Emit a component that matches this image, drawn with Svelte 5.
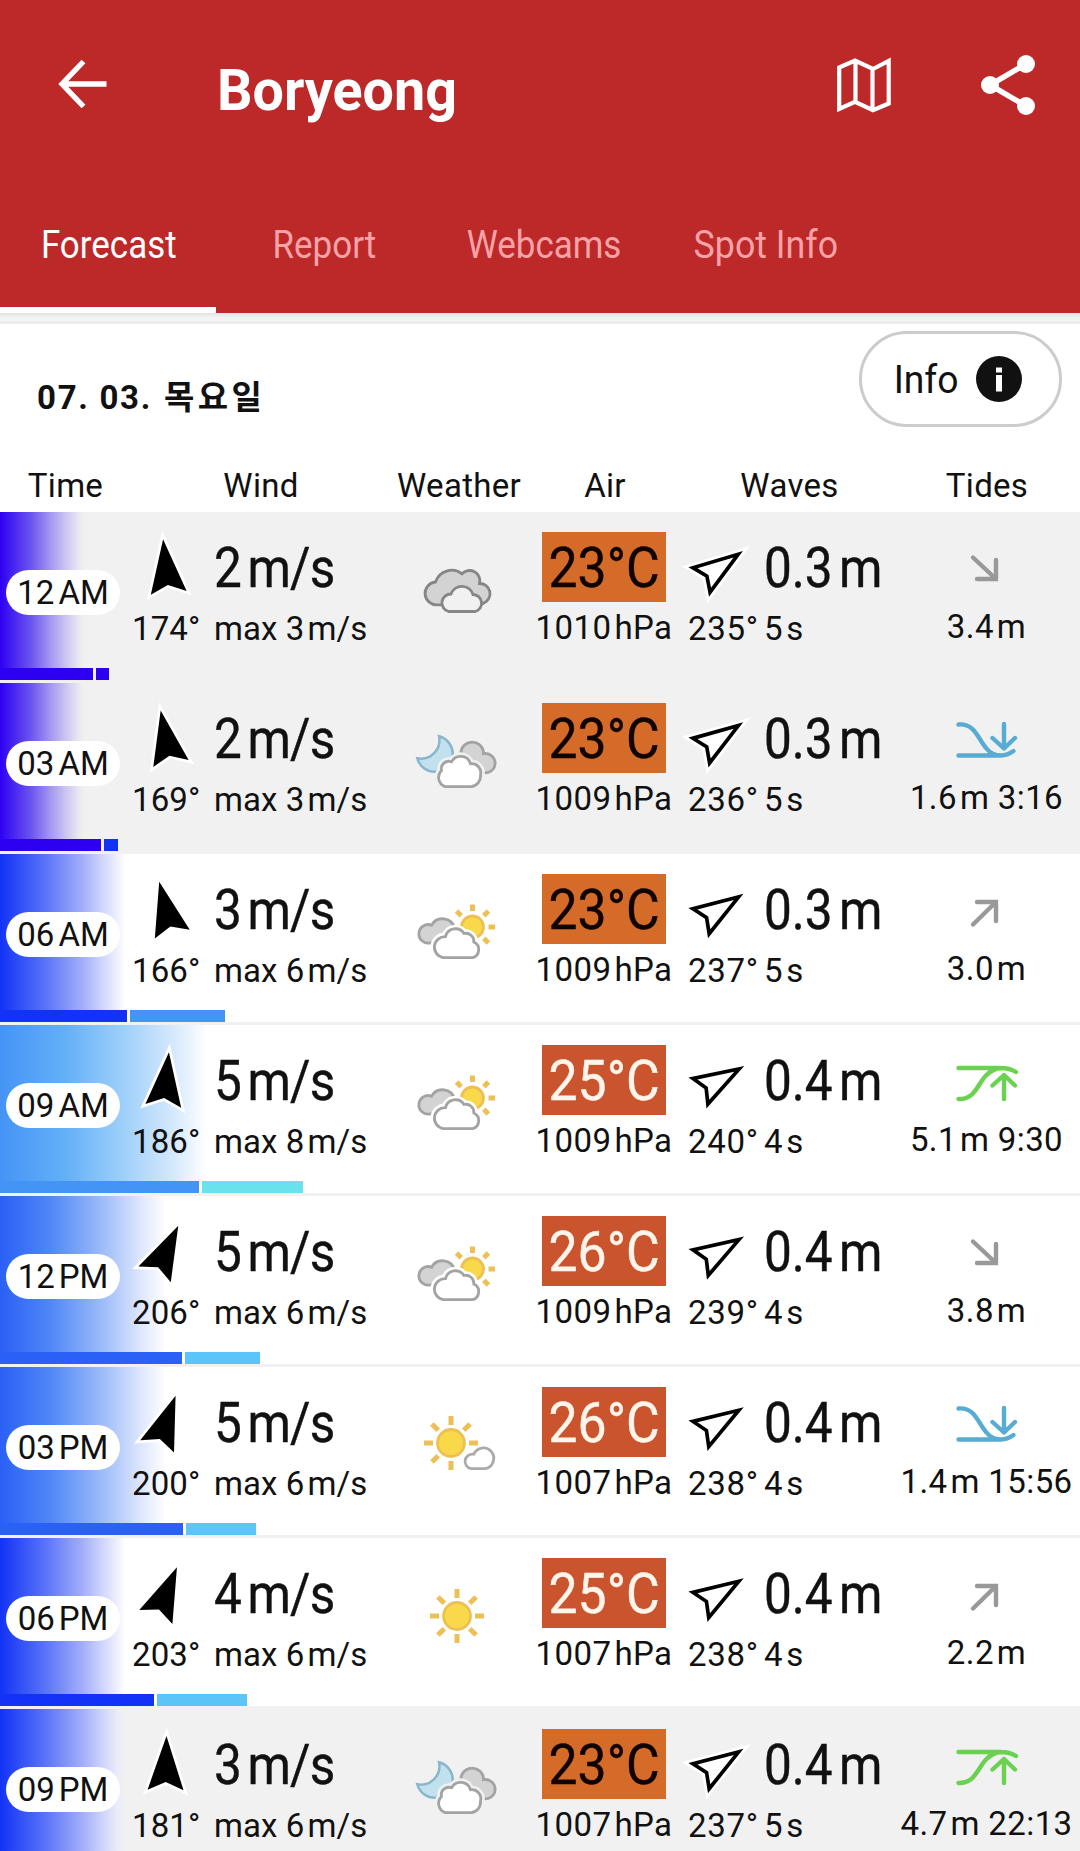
<script lang="ts">
  type Row = {
    time: string
    half: string
    night?: boolean
    fade: string
    fadeWidth: number
    bars: [number, string, number, string]
    dir: number
    speed: number
    gust: number
    sky: 'cloudy' | 'moon-clouds' | 'sun-clouds' | 'sun-cloud' | 'sun'
    temp: number
    pressure: number
    waveDir: number
    wave: string
    period: number
    tide: 'falling' | 'rising' | 'low' | 'high'
    level: string
    tideTime?: string
  }

  const tabs = ['Forecast', 'Report', 'Webcams', 'Spot Info']
  let activeTab = 'Forecast'

  const indigo = '#2d00f2, #6a52ee 36%, #a89cf0 62%, #cfc8f1 80%, rgba(228, 226, 241, 0.7) 93%, transparent'
  const blue = '#1232f5, #5873f8 36%, #a3aef9 66%, rgba(200, 206, 252, 0.85) 82%, rgba(232, 234, 253, 0.7) 94%, transparent'
  const royal = '#2a60f5, #4f86f6 30%, #9dbcf9 62%, rgba(214, 225, 253, 0.8) 85%, transparent'
  const sky = '#4494f6, #64b0f7 32%, #9fd0fa 60%, rgba(212, 232, 253, 0.9) 85%, transparent'

  const rows: Row[] = [
    { time: '12', half: 'AM', night: true, fade: indigo, fadeWidth: 84, bars: [93, '#2d00f2', 13, '#2d00f2'], dir: 174, speed: 2, gust: 3, sky: 'cloudy', temp: 23, pressure: 1010, waveDir: 235, wave: '0.3', period: 5, tide: 'falling', level: '3.4' },
    { time: '03', half: 'AM', night: true, fade: indigo, fadeWidth: 84, bars: [101, '#2d00f2', 14, '#1232f5'], dir: 169, speed: 2, gust: 3, sky: 'moon-clouds', temp: 23, pressure: 1009, waveDir: 236, wave: '0.3', period: 5, tide: 'low', level: '1.6', tideTime: '3:16' },
    { time: '06', half: 'AM', fade: blue, fadeWidth: 125, bars: [127, '#1232f5', 95, '#4494f6'], dir: 166, speed: 3, gust: 6, sky: 'sun-clouds', temp: 23, pressure: 1009, waveDir: 237, wave: '0.3', period: 5, tide: 'rising', level: '3.0' },
    { time: '09', half: 'AM', fade: sky, fadeWidth: 207, bars: [199, '#4494f6', 101, '#6ae2ee'], dir: 186, speed: 5, gust: 8, sky: 'sun-clouds', temp: 25, pressure: 1009, waveDir: 240, wave: '0.4', period: 4, tide: 'high', level: '5.1', tideTime: '9:30' },
    { time: '12', half: 'PM', fade: royal, fadeWidth: 166, bars: [182, '#2a60f5', 75, '#5bc4f9'], dir: 206, speed: 5, gust: 6, sky: 'sun-clouds', temp: 26, pressure: 1009, waveDir: 239, wave: '0.4', period: 4, tide: 'falling', level: '3.8' },
    { time: '03', half: 'PM', fade: royal, fadeWidth: 166, bars: [183, '#2a60f5', 70, '#5bc4f9'], dir: 200, speed: 5, gust: 6, sky: 'sun-cloud', temp: 26, pressure: 1007, waveDir: 238, wave: '0.4', period: 4, tide: 'low', level: '1.4', tideTime: '15:56' },
    { time: '06', half: 'PM', fade: blue, fadeWidth: 125, bars: [154, '#1232f5', 90, '#5bc4f9'], dir: 203, speed: 4, gust: 6, sky: 'sun', temp: 25, pressure: 1007, waveDir: 238, wave: '0.4', period: 4, tide: 'rising', level: '2.2' },
    { time: '09', half: 'PM', night: true, fade: blue, fadeWidth: 125, bars: [120, '#1232f5', 90, '#5bc4f9'], dir: 181, speed: 3, gust: 6, sky: 'moon-clouds', temp: 23, pressure: 1007, waveDir: 237, wave: '0.4', period: 5, tide: 'high', level: '4.7', tideTime: '22:13' }
  ]

  const rays = [0, 45, 90, 135, 180, 225, 270, 315]
</script>

<div class="app">
  <header>
    <div class="toolbar">
      <button class="icon-button back" aria-label="Back">
        <svg width="52" height="52" viewBox="0 0 52 52" fill="none" stroke="#fff" stroke-width="5.4">
          <path d="M50.5 26H7M27.5 3.5L6 26l21.5 22.5"></path>
        </svg>
      </button>
      <h1>Boryeong</h1>
      <button class="icon-button map" aria-label="Map">
        <svg width="58" height="58" viewBox="0 0 58 58" fill="none" stroke="#fff" stroke-width="4.2">
          <path d="M4.2 11.5L20 4.6l18 8.4L53.700 5v42.500L38 54.200l-18-8.400L4.200 53zM20.500 5v41M37.500 13v41"></path>
        </svg>
      </button>
      <button class="icon-button share" aria-label="Share">
        <svg width="60" height="62" viewBox="0 0 60 62" fill="#fff" stroke="#fff" stroke-width="5.5">
          <path d="M48 10L12 31l36 21" fill="none"></path>
          <circle cx="12" cy="31" r="9" stroke="none"></circle>
          <circle cx="48" cy="10" r="9" stroke="none"></circle>
          <circle cx="48" cy="52" r="9" stroke="none"></circle>
        </svg>
      </button>
    </div>
    <nav>
      {#each tabs as tab}
        <button class="tab" class:active={tab === activeTab} on:click={() => (activeTab = tab)}>
          <span>{tab}</span>
        </button>
      {/each}
    </nav>
  </header>
  <div class="header-shadow"></div>

  <section class="day">
    <h2>07. 03. <em>목요일</em></h2>
    <button class="info">
      <span>Info</span>
      <svg width="46" height="46" viewBox="0 0 46 46">
        <circle cx="23" cy="23" r="23" fill="#111"></circle>
        <path d="M20 11.5h6v5h-6zM20 19h6v16.5h-6z" fill="#fff"></path>
      </svg>
    </button>
  </section>

  <div class="grid labels">
    <span>Time</span>
    <span>Wind</span>
    <span>Weather</span>
    <span>Air</span>
    <span>Waves</span>
    <span>Tides</span>
  </div>

  {#each rows as row}
    <article class:night={row.night}>
      <div class="fade" style="width: {row.fadeWidth}px; background: linear-gradient(to right, {row.fade})"></div>
      <div class="grid values">
        <div class="time">
          <span class="pill">{row.time}<i>{row.half}</i></span>
        </div>

        <div class="pair wind">
          <svg class="arrow" width="76" height="76" viewBox="-38 -38 76 76">
            <g transform="rotate({row.dir - 180})">
              <path d="M0 -28L18 26L0 18L-18 26Z" stroke="#fff" stroke-width="5.5" paint-order="stroke" stroke-miterlimit="10"></path>
            </g>
          </svg>
          <span class="big">{row.speed}<i>m/s</i></span>
          <span class="small">{row.dir}°</span>
          <span class="small">max {row.gust}<i>m/s</i></span>
        </div>

        <div class="sky">
          <svg width="100" height="80" viewBox="0 0 100 80" stroke-width="2.8">
            {#if row.sky === 'cloudy'}
              <g transform="translate(0.5 -1)" stroke="#868686">
                <path fill="#d3d3d3" d="M27 47.8A11.4 11.4 0 0 1 25 25A17 17 0 0 1 51.5 16.8A10.3 10.3 0 0 1 69 26.5A10.2 10.2 0 0 1 73.5 46L70 47.8Z"></path>
                <path fill="#f1f1f1" d="M38 54.5A8.9 8.9 0 0 1 40.5 37A11.6 11.6 0 0 1 62.5 37.5A8.7 8.7 0 0 1 65 54.5Z"></path>
              </g>
            {:else if row.sky === 'moon-clouds'}
              <path fill="#c2e1ee" stroke="#8ab6cb" stroke-width="2.5" d="M29 7.3A18 18 0 1 1 7.3 29.3A18.5 18.5 0 0 0 29 7.3Z"></path>
              <g stroke="#a3a3a3">
                <path fill="#d3d3d3" d="M53 31A11.3 11.3 0 1 1 73.5 24.7A9.7 9.7 0 1 1 72 43.3Z"></path>
                <path class="halo" d="M35 57.6A9.8 9.8 0 0 1 31.5 41.5A7.5 7.5 0 0 1 41.5 32.8A10.3 10.3 0 0 1 60.5 34.8A9 9 0 0 1 70.5 46A10.5 10.5 0 0 1 61 57.6Z"></path>
                <path fill="#fff" d="M35 57.6A9.8 9.8 0 0 1 31.5 41.5A7.5 7.5 0 0 1 41.5 32.8A10.3 10.3 0 0 1 60.5 34.8A9 9 0 0 1 70.5 46A10.5 10.5 0 0 1 61 57.6Z"></path>
              </g>
            {:else if row.sky === 'sun-clouds'}
              <g transform="translate(62.5 27)" stroke="#ecc055">
                <circle r="11" fill="#f9d84a"></circle>
                {#each [0, 45, 90, 135, 315] as ray}
                  <path transform="rotate({ray})" d="M0 -16V-22.5" stroke-width="5"></path>
                {/each}
              </g>
              <g transform="translate(1 0)" stroke="#a3a3a3">
                <path fill="#d3d3d3" d="M19 43A9.3 9.3 0 1 1 20.5 25.2A12.5 12.5 0 0 1 43.5 28L36 42Z"></path>
                <path class="halo" d="M32 57.6A10.6 10.6 0 0 1 34.5 36.6A10.2 10.2 0 0 1 53 33.5A8 8 0 0 1 62.8 42A8.3 8.3 0 0 1 61.5 57.6Z"></path>
                <path fill="#fff" d="M32 57.6A10.6 10.6 0 0 1 34.5 36.6A10.2 10.2 0 0 1 53 33.5A8 8 0 0 1 62.8 42A8.3 8.3 0 0 1 61.5 57.6Z"></path>
              </g>
            {:else if row.sky === 'sun-cloud'}
              <g transform="translate(41 30)" stroke="#ecc055">
                <circle r="13.5" fill="#f9d84a"></circle>
                {#each rays.filter((r) => r !== 135) as ray}
                  <path transform="rotate({ray})" d="M0 -18V-27" stroke-width="5"></path>
                {/each}
              </g>
              <path fill="#fff" stroke="#aaa" d="M61 55.6A7 7 0 0 1 63.8 41.2A10.4 10.4 0 1 1 75 55.6Z"></path>
            {:else}
              <g transform="translate(47 32)" stroke="#ecc055">
                <circle r="13.5" fill="#f9d84a"></circle>
                {#each rays as ray}
                  <path transform="rotate({ray})" d="M0 -18V-27" stroke-width="5"></path>
                {/each}
              </g>
            {/if}
          </svg>
        </div>

        <div class="air">
          <span class="temp" class:hot={row.temp > 24}><b>{row.temp}°C</b></span>
          <span class="small">{row.pressure}<i>hPa</i></span>
        </div>

        <div class="pair waves">
          <svg class="arrow" width="76" height="76" viewBox="-38 -38 76 76">
            <g transform="rotate({row.waveDir - 180})">
              <path d="M0 -28L18 26L0 18L-18 26Z" stroke="#fff" stroke-width="5.5" paint-order="stroke" stroke-miterlimit="10"></path>
              <path d="M0 -16.5L11.8 19.2L0 14L-11.8 19.2Z" fill="#fff"></path>
            </g>
          </svg>
          <span class="big">{row.wave}<i>m</i></span>
          <span class="small">{row.waveDir}°</span>
          <span class="small">{row.period}<i>s</i></span>
        </div>

        <div class="tides">
          <svg width="64" height="44" viewBox="0 0 64 44" fill="none" stroke-width="4.4" stroke-linecap="round" stroke-linejoin="round">
            {#if row.tide === 'falling'}
              <path stroke="#999" stroke-linejoin="miter" d="M18 9.5L41 31M41 12V31H22"></path>
            {:else if row.tide === 'rising'}
              <path stroke="#999" stroke-linejoin="miter" d="M18 34.5L41 12M22 12H41V31"></path>
            {:else if row.tide === 'low'}
              <g stroke="#58abd2">
                <path d="M3.5 5.5C20 4 23 20 31 29Q37 36.5 46 36.5M3.5 36.5H46C52 36.5 55 34.5 58.5 32"></path>
                <path d="M49 5V29.5M37.5 19L49 29.5L60 19"></path>
              </g>
            {:else}
              <g stroke="#6bd150">
                <path d="M3.5 38C20 38.5 22 24 31 14.5Q38 7.5 46 7M3.5 7H46C53 7 57 8.5 61 11"></path>
                <path d="M49 38V14M37.5 24.5L49 14L60 24.5"></path>
              </g>
            {/if}
          </svg>
          <span class="small">{row.level}<i>m</i>{row.tideTime ? ' ' + row.tideTime : ''}</span>
        </div>
      </div>
      <div class="bars">
        <div style="width: {row.bars[0]}px; background: {row.bars[1]}"></div>
        <div style="width: {row.bars[2]}px; background: {row.bars[3]}"></div>
      </div>
    </article>
  {/each}
</div>

<style>
  :global(body) {
    background: #fff;
    overflow: hidden;
  }

  .app {
    width: 1080px;
    height: 1851px;
    overflow: hidden;
    color: #111;
    font-family: Roboto, "Noto Sans CJK KR", sans-serif;
  }

  button {
    margin: 0;
    padding: 0;
    border: none;
    background: none;
    color: inherit;
    font: inherit;
    cursor: pointer;
  }

  svg {
    display: block;
    flex: none;
  }

  i,
  em {
    font-style: normal;
  }

  header {
    height: 313px;
    background: #bd2829;
    color: #fff;
  }

  .toolbar {
    display: flex;
    height: 168px;
    padding-left: 56px;
    box-sizing: border-box;
  }

  .icon-button {
    height: 62px;
    flex: none;
  }

  .back {
    height: 52px;
    margin-top: 58px;
  }

  h1 {
    flex: 1;
    margin: 58px 0 0 109px;
    font-size: 58px;
    line-height: 64px;
    font-weight: 700;
    transform: scaleX(0.96);
    transform-origin: left;
  }

  .map {
    margin: 54px 0 0;
  }

  .share {
    margin: 54px 42px 0 85px;
  }

  nav {
    display: grid;
    grid-template-columns: 216px 217px 222px 221px;
    height: 145px;
  }

  .tab {
    display: flex;
    justify-content: center;
    padding-top: 53px;
    box-sizing: border-box;
    border-bottom: 6px solid transparent;
    font-size: 38px;
    line-height: 48px;
    color: #f6a3a8;
  }

  .tab span,
  .info span {
    display: block;
    transform: scaleX(0.92);
    white-space: nowrap;
  }

  .tab:first-child span {
    margin-left: 2px;
  }

  .tab:last-child span {
    transform: scaleX(0.94);
  }

  .tab.active {
    color: #fff;
    border-color: #fff;
  }

  .header-shadow {
    height: 11px;
    box-sizing: border-box;
    background: linear-gradient(#e2e2e2, #f3f5f5 5px);
    border-bottom: 3px solid #ececec;
  }

  .day {
    display: flex;
    justify-content: space-between;
    align-items: flex-start;
    height: 134px;
    padding: 7px 18px 0 37px;
    box-sizing: border-box;
  }

  h2 {
    margin: 43px 0 0;
    font-size: 33px;
    line-height: 48px;
    font-weight: 700;
    letter-spacing: 1.7px;
  }

  h2 em {
    margin-left: 2px;
    letter-spacing: 3.5px;
  }

  .info {
    display: flex;
    align-items: center;
    gap: 17px;
    width: 203px;
    height: 96px;
    padding-left: 31px;
    box-sizing: border-box;
    border: 3px solid #ccc;
    border-radius: 48px;
    font-size: 38px;
  }

  .info span {
    margin-top: 2px;
    transform: scaleX(0.98);
  }

  .grid {
    display: grid;
    grid-template-columns: 126px 264px 136px 156px 210px 188px;
  }

  .labels {
    height: 54px;
    font-size: 33px;
    line-height: 56px;
    letter-spacing: 0.3px;
    text-align: center;
  }

  .labels span {
    padding-left: 2px;
  }

  .labels span:nth-child(1) {
    padding-left: 5px;
  }

  .labels span:nth-child(2) {
    padding-left: 6px;
  }

  .labels span:nth-child(5) {
    padding-left: 5px;
  }

  article {
    position: relative;
    height: 171px;
    box-sizing: border-box;
    border-bottom: 3px solid #f1f1f1;
  }

  article.night {
    background: #f1f1f1;
  }

  .fade {
    position: absolute;
    inset: 0 auto 0 0;
  }

  .values {
    position: relative;
    height: 156px;
  }

  .bars {
    position: relative;
    display: flex;
    gap: 3px;
    height: 12px;
  }

  .time {
    padding: 58px 0 0 6px;
  }

  .pill {
    display: flex;
    justify-content: center;
    width: 114px;
    height: 45px;
    border-radius: 23px;
    background: #fff;
    font-size: 33px;
    line-height: 46px;
  }

  .pill i {
    margin-left: 4px;
  }

  .pair {
    display: grid;
    grid-template-rows: 70px 54px;
    padding-top: 20px;
    align-content: start;
    white-space: nowrap;
  }

  .wind {
    grid-template-columns: 89px 1fr;
  }

  .waves {
    grid-template-columns: 82px 1fr;
  }

  .arrow {
    margin-top: -3px;
  }

  .wind .arrow {
    margin-left: 2px;
  }

  .big {
    font-size: 55px;
    line-height: 72px;
    transform: scaleX(0.9);
    transform-origin: left;
    -webkit-text-stroke: 0.4px;
  }

  .big i {
    margin-left: 7px;
  }

  .wind .big {
    margin-left: -1px;
    letter-spacing: -0.8px;
  }

  .small {
    font-size: 33px;
    line-height: 54px;
    letter-spacing: 0.4px;
    white-space: nowrap;
  }

  .small i {
    margin-left: 3px;
  }

  .wind .small {
    margin-left: -1px;
    letter-spacing: 0.1px;
  }

  .wind .small:nth-child(3) {
    padding-left: 7px;
  }

  .waves .small {
    letter-spacing: 0.7px;
  }

  .waves .small:nth-child(3) {
    padding-left: 6px;
  }

  .sky {
    padding: 46px 0 0 20px;
  }

  .halo {
    fill: none;
    stroke: #fff;
    stroke-width: 8;
  }

  .night .halo {
    stroke: #f1f1f1;
  }

  .air {
    display: flex;
    flex-direction: column;
    align-items: center;
    padding-top: 20px;
  }

  .air .small {
    margin-top: -1px;
  }

  .temp {
    display: flex;
    justify-content: center;
    width: 124px;
    height: 70px;
    background: #d46b29;
    color: #100400;
    font-size: 55px;
    line-height: 72px;
  }

  .temp b {
    font-weight: 400;
    transform: scaleX(0.94);
    -webkit-text-stroke: 0.4px;
  }

  .temp.hot {
    background: #c9542d;
    color: #fff5ea;
  }

  .tides {
    display: flex;
    flex-direction: column;
    align-items: center;
    padding: 36px 0 0 1px;
  }

  .tides .small {
    margin-top: 8px;
  }
</style>
